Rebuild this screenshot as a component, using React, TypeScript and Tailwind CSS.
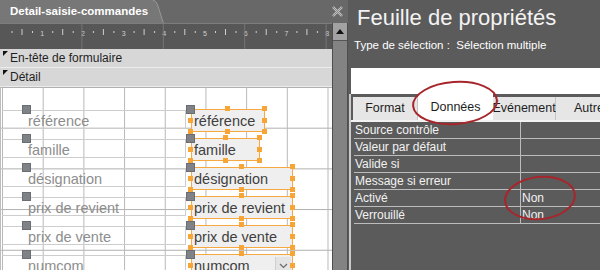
import React from "react";

const fields = [
  { name: "référence", w: 74 },
  { name: "famille", w: 69 },
  { name: "désignation", w: 102 },
  { name: "prix de revient", w: 102 },
  { name: "prix de vente", w: 102 },
  { name: "numcom", w: 102, combo: true },
];

const props = [
  { label: "Source contrôle", value: "" },
  { label: "Valeur par défaut", value: "" },
  { label: "Valide si", value: "" },
  { label: "Message si erreur", value: "" },
  { label: "Activé", value: "Non" },
  { label: "Verrouillé", value: "Non" },
];

function Ruler() {
  const unit = 40.7;
  const marks: React.ReactNode[] = [];
  for (let k = 0; k < 9; k++) {
    const x = 1.5 + unit * k;
    if (k > 0)
      marks.push(
        <text key={"n" + k} x={x} y={12} fontSize="7" fill="#d0d0d0" textAnchor="middle">
          {k}
        </text>
      );
    if (k > 0 && k % 2 === 0)
      marks.push(<line key={"m" + k} x1={x - 1} x2={x - 1} y1={0} y2={25} stroke="#767676" />);
    if (x + 10 < 330) marks.push(<rect key={"a" + k} x={x + 10} y={7} width={1} height={2} fill="#cfcfcf" />);
    if (x + 20 < 330) marks.push(<rect key={"b" + k} x={x + 20} y={5} width={1} height={6} fill="#cfcfcf" />);
    if (x + 30 < 330) marks.push(<rect key={"c" + k} x={x + 30.5} y={7} width={1} height={2} fill="#cfcfcf" />);
  }
  return (
    <svg width="332" height="25" className="block">
      {marks}
    </svg>
  );
}

function Handles({ w, h }: { w: number; h: number }) {
  const pts = [
    [w / 2, 0],
    [w, 0],
    [0, h / 2],
    [w, h / 2],
    [0, h],
    [w / 2, h],
    [w, h],
  ];
  return (
    <>
      {pts.map(([x, y], i) => (
        <span
          key={i}
          className="absolute w-[5px] h-[5px] bg-[#f7a536]"
          style={{ left: x - 3, top: y - 3 }}
        />
      ))}
    </>
  );
}

function Canvas() {
  return (
    <div className="relative flex-1 overflow-hidden bg-white border-l border-[#bdbdbd] bg-[linear-gradient(to_right,#b8b8b8_1px,transparent_1px),linear-gradient(to_bottom,#b0b0b0_1px,transparent_1px)] bg-[size:40.7px_40.7px] bg-[position:1px_0px]">
      {fields.map((f, i) => {
        const top = 22 + 29 * i;
        return (
          <React.Fragment key={f.name}>
            {/* label control */}
            <div
              className="absolute left-[1px] w-[184px] h-[19px] border-y border-r border-[#cdcdcd] pl-[26px] pt-[1px] text-[14.5px] leading-[18px] text-[#8d8d8d] whitespace-nowrap"
              style={{ top: top + 1 }}
            >
              {f.name}
            </div>
            <span
              className="absolute left-[21px] w-[9px] h-[9px] bg-[#7f8287] border border-[#6a6d71]"
              style={{ top: top - 4 }}
            />
            {/* text box control */}
            <div className="absolute left-[190px] h-[23px]" style={{ top, width: f.w }}>
              <div className="absolute inset-0 border border-[#f7a940] bg-[#efefef] pl-[2px] text-[14.5px] leading-[22px] text-[#3f3f3f] whitespace-nowrap flex">
                <span className="flex-1">{f.name}</span>
                {f.combo && (
                  <span className="w-[16px] my-[2px] mr-[1px] border-l border-[#cfcfcf] bg-[#e4e4e4] flex items-center justify-center">
                    <svg width="9" height="6" viewBox="0 0 9 6">
                      <path d="M1 1l3.5 3.5L8 1" fill="none" stroke="#6a6a6a" strokeWidth="1.2" />
                    </svg>
                  </span>
                )}
              </div>
              <Handles w={f.w} h={23} />
              <span className="absolute left-[-5px] top-[-4px] w-[9px] h-[9px] bg-[#7f8287] border border-[#6a6d71]" />
            </div>
          </React.Fragment>
        );
      })}
    </div>
  );
}

function SectionBar({ label }: { label: string }) {
  return (
    <div className="relative h-[19px] bg-[#d7d7d7] border-b border-[#ececec] pl-[10px] text-[12px] leading-[19px] text-[#1f1f1f]">
      <svg width="5" height="5" className="absolute left-[3px] top-[2px]">
        <path d="M0 0h5L0 5z" fill="#111" />
      </svg>
      {label}
    </div>
  );
}

function Designer() {
  return (
    <div className="w-[348px] flex flex-col bg-[#686868]">
      <div className="h-[23px] flex items-stretch">
        <div className="flex items-stretch">
          <div className="bg-[#777777] pl-[10px] pr-[2px] text-[11.5px] font-bold leading-[23px] text-white whitespace-nowrap">
            Detail-saisie-commandes
          </div>
          <svg width="14" height="23" className="block">
            <path d="M0 0h3c4 0 5 6 7 12s3 11 4 11H0z" fill="#777777" />
            <path d="M3 0.5c4 0 5 6 7 12s3 10.5 4 10.5" fill="none" stroke="#9a9a9a" />
          </svg>
        </div>
        <div className="flex-1" />
        <div className="w-[16px] flex items-center justify-center mr-[3px]">
          <svg width="11" height="11" viewBox="0 0 11 11">
            <path d="M1 1l9 9M10 1l-9 9" stroke="#c4c4c4" strokeWidth="2.4" />
            <path d="M1 1l9 9M10 1l-9 9" stroke="#7a7a7a" strokeWidth="0.8" />
          </svg>
        </div>
      </div>
      <div className="flex-1 flex">
        <div className="w-[332px] flex flex-col">
          <div className="h-[26px] bg-[#575757] border-t border-[#7d7d7d]">
            <Ruler />
          </div>
          <SectionBar label="En-tête de formulaire" />
          <SectionBar label="Détail" />
          <Canvas />
        </div>
        <div className="w-[16px] flex flex-col bg-[#838383] border-x border-[#4e4e4e]">
          <div className="h-[18px] bg-[#a2a2a2] border-b border-[#555] flex items-center justify-center">
            <svg width="8" height="5">
              <path d="M0 5L4 0l4 5z" fill="#111" />
            </svg>
          </div>
        </div>
      </div>
    </div>
  );
}

function PropertySheet() {
  return (
    <div className="flex-1 flex flex-col bg-[#5b5b5b] text-white">
      <div className="pl-[9px] pt-[3px] h-[33px] text-[22px] leading-[30px] text-[#f3f3f3] whitespace-nowrap">
        Feuille de propriétés
      </div>
      <div className="pl-[6px] mt-[4px] h-[16px] text-[11.5px] leading-[16px] whitespace-pre">
        Type de sélection :  Sélection multiple
      </div>
      <div className="ml-[3px] mt-[15px] h-[26px] bg-white" />
      <div className="flex-1 flex flex-col ml-[1px] border-l-2 border-[#c9c9c9]">
        <div className="mt-[3px] h-[23px] flex items-stretch pl-[2px] text-[12.5px] text-[#1e1e1e]">
          <div className="w-[65px] bg-[#e6e6e6] border-r border-[#c4c4c4] flex items-center justify-center">Format</div>
          <div className="w-[75px] -mt-[3px] h-[27px] bg-white flex items-center justify-center">Données</div>
          <div className="w-[63px] bg-[#e6e6e6] border-r border-[#c4c4c4] flex items-center justify-center">Événement</div>
          <div className="flex-1 bg-[#e6e6e6] pl-[18px] flex items-center">Autre</div>
        </div>
        <div className="h-[2px] bg-[#f2f2f2]" />
        <div className="pl-[3px]">
          {props.map((p) => (
            <div key={p.label} className="h-[17px] flex border-b border-[#bcbcbc] text-[12px] leading-[16px] text-[#f2f2f2]">
              <div className="w-[167px] pl-[1px] border-r border-[#bcbcbc] whitespace-nowrap">{p.label}</div>
              <div className="flex-1 pl-[1px]">{p.value}</div>
            </div>
          ))}
        </div>
      </div>
    </div>
  );
}

export default function App() {
  return (
    <div className="relative w-[600px] h-[270px] flex overflow-hidden bg-[#5b5b5b] font-['Liberation_Sans',sans-serif]">
      <Designer />
      <div className="w-[3px] bg-[#474747]" />
      <PropertySheet />
      <svg width="600" height="270" className="absolute inset-0 pointer-events-none">
        <ellipse cx="455" cy="103" rx="42" ry="21" fill="none" stroke="#a6262c" strokeWidth="2" transform="rotate(-4 455 103)" />
        <ellipse cx="540" cy="198" rx="35" ry="21" fill="none" stroke="#a6262c" strokeWidth="2" transform="rotate(-6 540 198)" />
      </svg>
    </div>
  );
}
